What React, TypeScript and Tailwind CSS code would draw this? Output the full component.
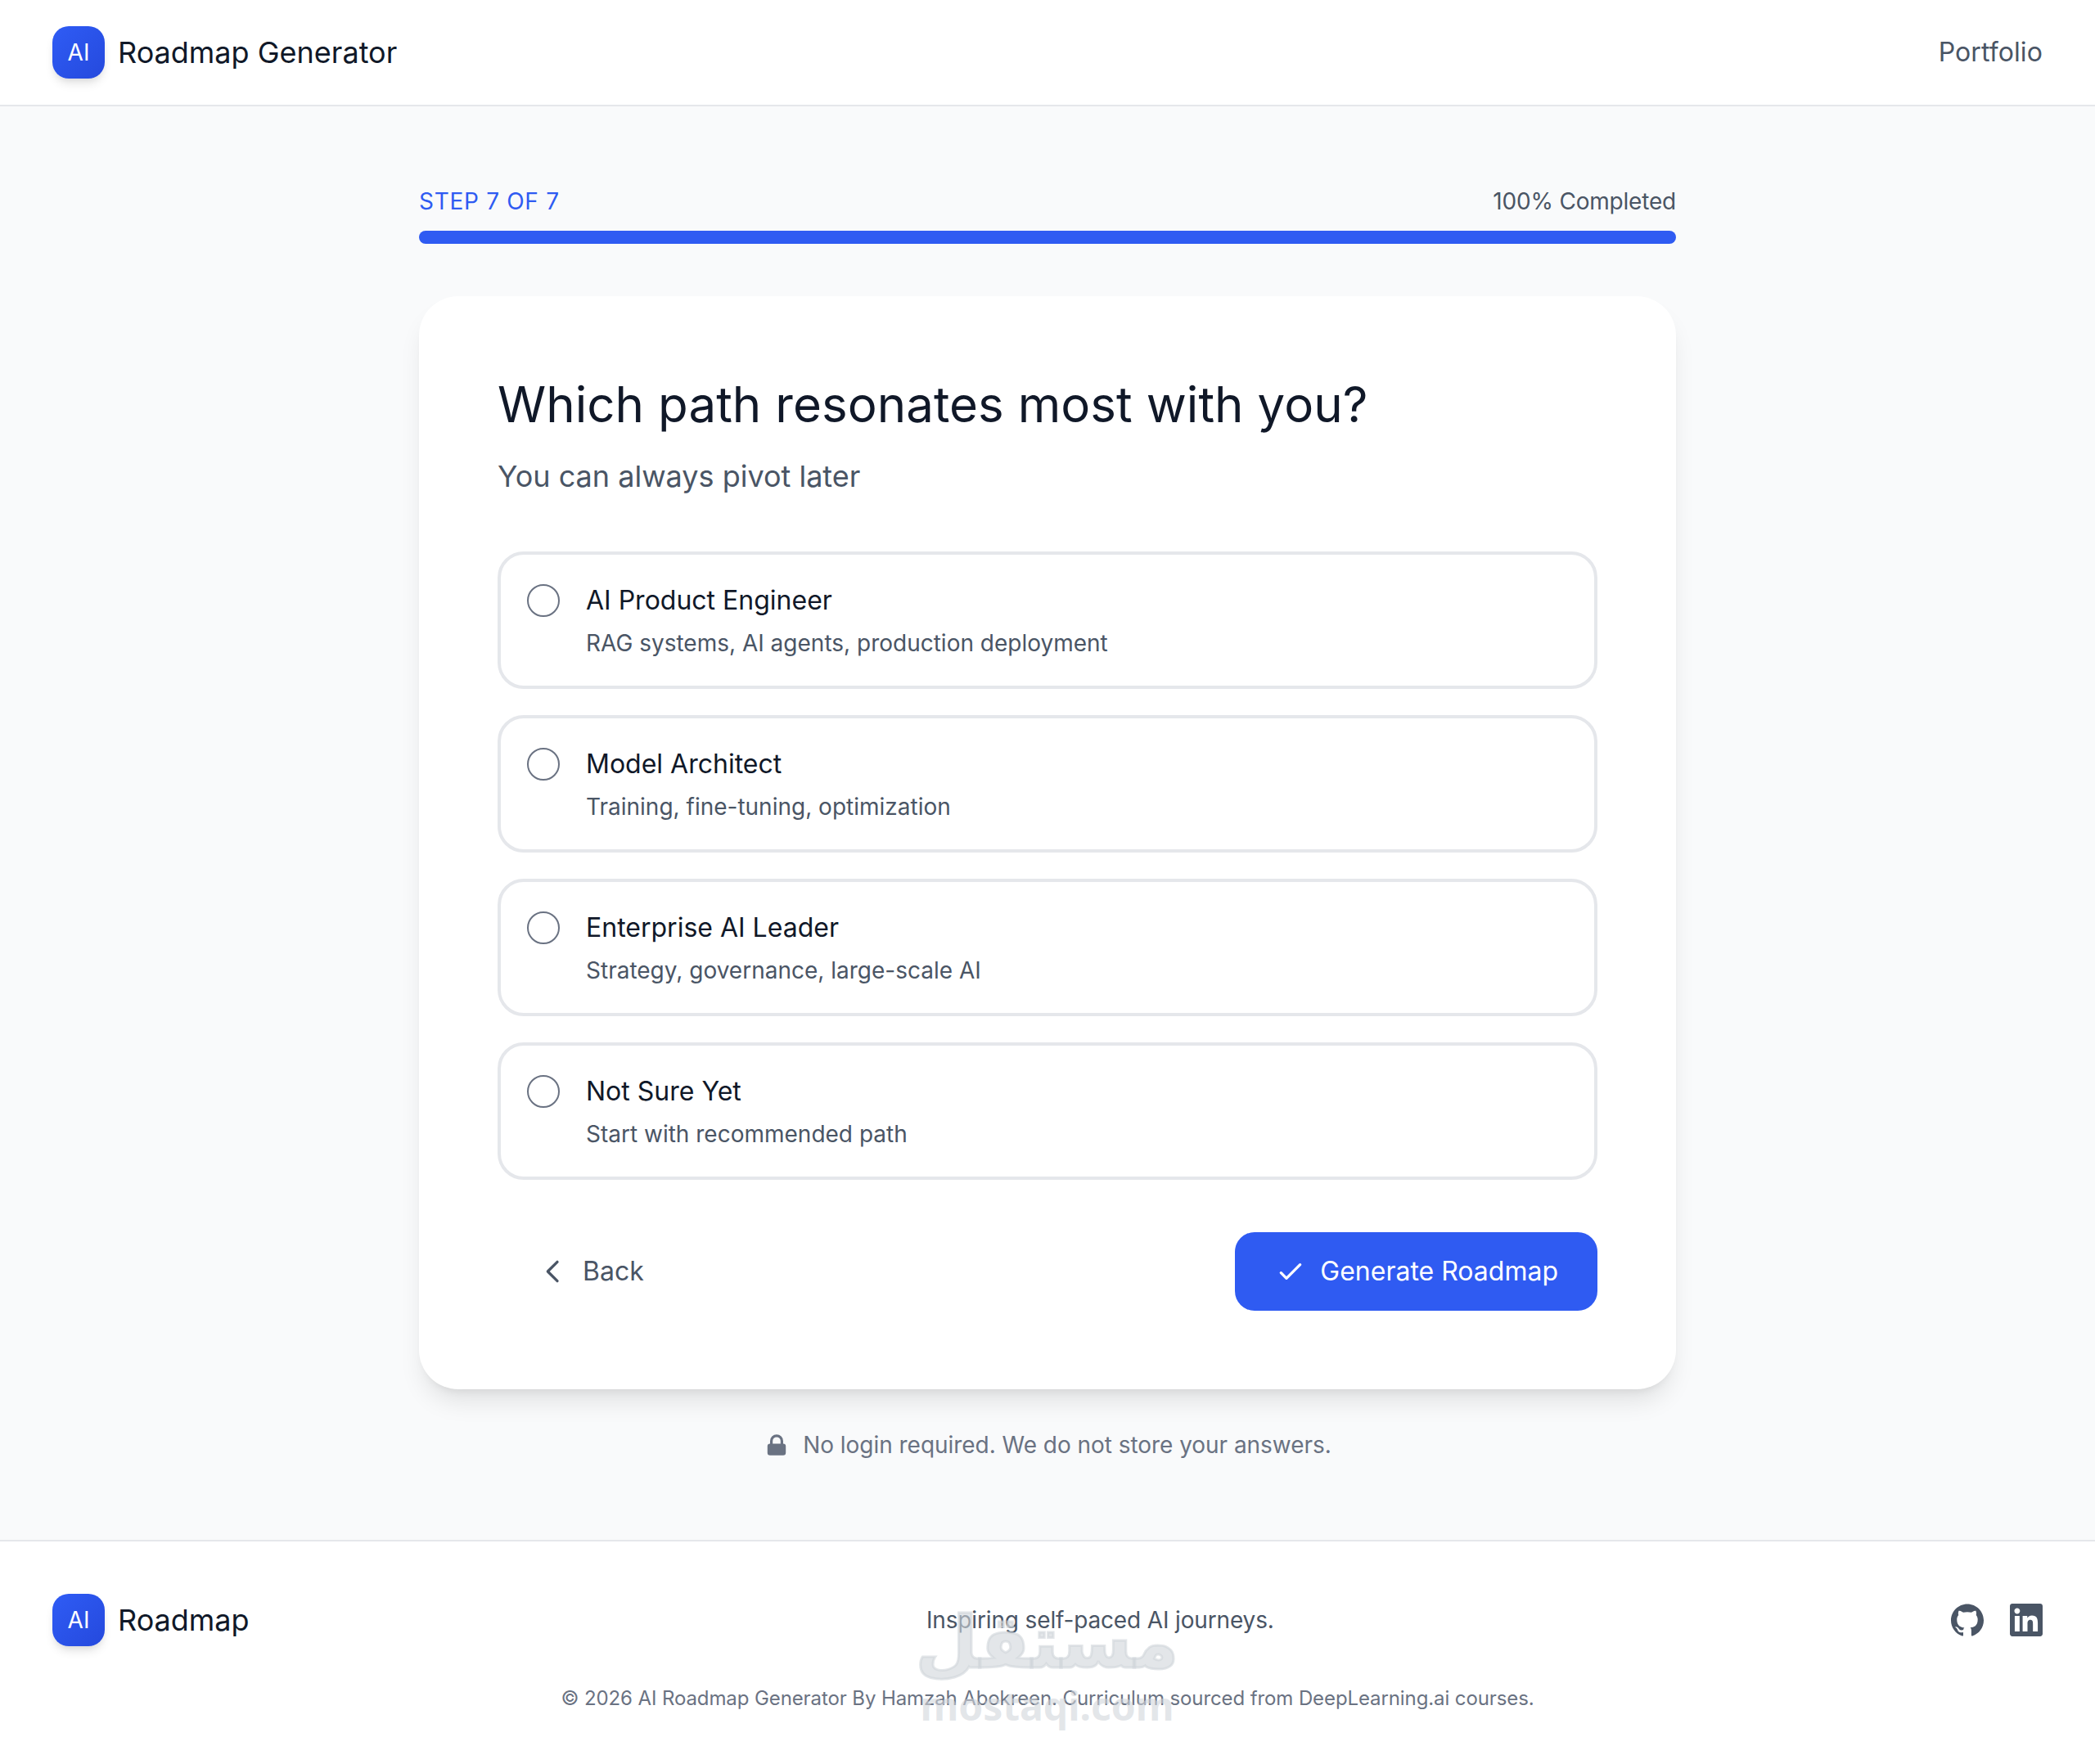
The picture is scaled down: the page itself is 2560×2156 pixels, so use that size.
import React from 'react';
import { SiGithub, SiLinkedin } from 'react-icons/si';

const options = [
  { title: 'AI Product Engineer', desc: 'RAG systems, AI agents, production deployment' },
  { title: 'Model Architect', desc: 'Training, fine-tuning, optimization' },
  { title: 'Enterprise AI Leader', desc: 'Strategy, governance, large-scale AI' },
  { title: 'Not Sure Yet', desc: 'Start with recommended path' },
];

const LogoBadge: React.FC = () => (
  <div className="w-16 h-16 rounded-[20px] bg-gradient-to-br from-[#2f5cf5] to-[#2549dd] shadow-[0_8px_12px_-2px_rgba(0,0,0,0.1),0_4px_8px_-4px_rgba(0,0,0,0.1)] flex items-center justify-center text-white text-[28px]">
    AI
  </div>
);

const App: React.FC = () => {
  return (
    <div className="relative min-h-screen flex flex-col bg-gray-50 font-['Inter',sans-serif]">
      <header className="h-[130px] bg-white border-b-2 border-gray-200 px-16 flex items-center justify-between">
        <div className="flex items-center gap-4">
          <LogoBadge />
          <span className="text-[36px] leading-[56px] text-gray-900">Roadmap Generator</span>
        </div>
        <span className="text-[32px] leading-[48px] tracking-[0.1px] text-gray-600">Portfolio</span>
      </header>

      <main className="flex-1 py-24">
        <div className="w-[1536px] mx-auto">
          <div className="flex items-center justify-between mb-4">
            <span className="text-[28px] leading-10 tracking-[0.7px] uppercase text-[#2f5bf2]">Step 7 of 7</span>
            <span className="text-[28px] leading-10 tracking-[-0.2px] text-gray-600">100% Completed</span>
          </div>
          <div className="h-4 rounded-full bg-[#2f5bf2] mb-16" />

          <div className="bg-white rounded-[48px] p-24 shadow-[0_20px_30px_-6px_rgba(0,0,0,0.1),0_8px_12px_-8px_rgba(0,0,0,0.1)]">
            <h1 className="text-[60px] leading-[72px] tracking-[0.05px] text-gray-900 mb-6">Which path resonates most with you?</h1>
            <p className="text-[36px] leading-[56px] text-gray-600 mb-16">You can always pivot later</p>

            <div className="flex flex-col gap-8">
              {options.map((o) => (
                <div key={o.title} className="h-[168px] border-4 border-gray-200 rounded-[32px] p-8 flex items-start gap-8">
                  <div className="w-10 h-10 mt-1 shrink-0 rounded-full border-2 border-gray-500 bg-white" />
                  <div>
                    <div className="text-[32px] leading-[48px] text-gray-900">{o.title}</div>
                    <div className="text-[28px] leading-10 mt-2 text-gray-600">{o.desc}</div>
                  </div>
                </div>
              ))}
            </div>

            <div className="flex items-center justify-between mt-16">
              <button className="h-24 px-12 flex items-center gap-4 text-[32px] text-gray-600">
                <svg className="w-10 h-10" viewBox="0 0 24 24" fill="none" stroke="currentColor" strokeWidth={2} strokeLinecap="round" strokeLinejoin="round">
                  <path d="M15 19l-7-7 7-7" />
                </svg>
                Back
              </button>
              <button className="h-24 px-12 rounded-3xl bg-[#2f5bf2] flex items-center gap-4 text-[32px] text-white">
                <svg className="w-10 h-10" viewBox="0 0 24 24" fill="none" stroke="currentColor" strokeWidth={2} strokeLinecap="round" strokeLinejoin="round">
                  <path d="M5 13l4 4L19 7" />
                </svg>
                Generate Roadmap
              </button>
            </div>
          </div>

          <div className="mt-12 flex items-center justify-center gap-4 text-[28px] leading-10 tracking-[-0.04px] text-gray-500">
            <svg className="w-8 h-8" viewBox="0 0 20 20" fill="currentColor">
              <path fillRule="evenodd" clipRule="evenodd" d="M5 9V7a5 5 0 0110 0v2a2 2 0 012 2v5a2 2 0 01-2 2H5a2 2 0 01-2-2v-5a2 2 0 012-2zm8-2v2H7V7a3 3 0 016 0z" />
            </svg>
            No login required. We do not store your answers.
          </div>
        </div>
      </main>

      <footer className="bg-white border-t-2 border-gray-200 px-16 pt-16 pb-16">
        <div className="flex items-center justify-between">
          <div className="flex items-center gap-4">
            <LogoBadge />
            <span className="text-[36px] leading-[56px] text-gray-900">Roadmap</span>
          </div>
          <p className="text-[28px] leading-10 tracking-[-0.15px] text-gray-600">Inspiring self-paced AI journeys.</p>
          <div className="flex items-center gap-8 text-gray-600">
            <SiGithub size={40} />
            <SiLinkedin size={40} />
          </div>
        </div>
        <p className="mt-12 text-center text-[24px] leading-8 tracking-[-0.1px] text-gray-500">
          © 2026 AI Roadmap Generator By Hamzah Abokreen. Curriculum sourced from DeepLearning.ai courses.
        </p>
      </footer>

      {/* watermark over the footer */}
      <div className="absolute left-[1126px] top-[1952px] w-[307px] flex flex-col items-center pointer-events-none text-[#d1d5db]/60 font-bold font-['DejaVu_Sans',sans-serif]">
        <span dir="rtl" lang="ar" className="text-[88px] leading-[112px] [-webkit-text-stroke:3px_rgba(209,213,219,0.6)]">مستقل</span>
        <span className="-mt-1 text-[48px] leading-[50px] font-['Noto_Sans',sans-serif]">mostaqi.com</span>
      </div>
    </div>
  );
};

export default App;
